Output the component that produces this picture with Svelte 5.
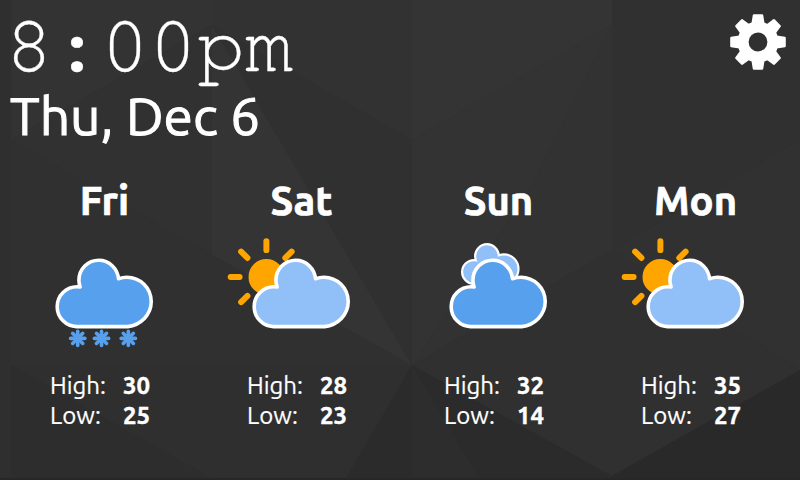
<script>
  const days = [
    { name: 'Fri', icon: 'snow', high: 30, low: 25 },
    { name: 'Sat', icon: 'sun', high: 28, low: 23 },
    { name: 'Sun', icon: 'cloud', high: 32, low: 14 },
    { name: 'Mon', icon: 'sun', high: 35, low: 27 }
  ];
  const cloud =
    'M47.7 35.4c0-4.6-3.7-8.2-8.2-8.2c-1 0-1.9.2-2.8.5c-.3-3.4-3.1-6.2-6.6-6.2c-3.7 0-6.7 3-6.7 6.7c0 .8.2 1.6.4 2.3c-.3-.1-.7-.1-1-.1c-3.7 0-6.7 3-6.7 6.7c0 3.6 2.9 6.6 6.5 6.7h17.2C44.2 43.3 47.7 39.8 47.7 35.4z';
  const turns = [0, 45, 90, 135, 180, 225, 270, 315];
</script>

<main class="screen">
  <svg class="backdrop" viewBox="0 0 800 480" aria-hidden="true">
    <rect width="800" height="480" fill="#303030" />
    <path d="M11 0H212V25L11 140z" fill="#333333" />
    <path d="M0 0H11V480H0z" fill="#2f2f2f" />
    <path d="M212 25L11 140L212 255z" fill="#313131" />
    <path d="M212 25V255L412 365z" fill="#343434" />
    <path d="M212 25L412 140V365z" fill="#303030" />
    <path d="M212 25V0H412V140z" fill="#323232" />
    <path d="M412 0H612V25L412 140z" fill="#343434" />
    <path d="M412 140L612 25L530 190L412 365z" fill="#333333" />
    <path d="M612 25V250L412 365L530 190z" fill="#323232" />
    <path d="M612 25L800 140L612 250z" fill="#303030" />
    <path d="M612 250L800 140V370z" fill="#313131" />
    <path d="M11 140L212 255L412 365H11z" fill="#303030" />
    <path d="M11 365L215 480H11z" fill="#2d2d2d" />
    <path d="M11 365H412L345 480H215z" fill="#2f2f2f" />
    <path d="M412 365L345 480H412z" fill="#2b2b2b" />
    <path d="M412 365V480H480z" fill="#2d2d2d" />
    <path d="M412 365L612 476V480H480z" fill="#2b2b2b" />
    <path d="M412 365L612 250L800 370L612 476z" fill="#303030" />
    <path d="M800 370L612 476V480H800z" fill="#292929" />
    <rect y="478" width="800" height="2" fill="#2a2528" />
  </svg>

  <header>
    <div>
      <div class="time">8:00pm</div>
      <div class="date">Thu, Dec 6</div>
    </div>
    <svg class="gear" viewBox="-28 -28 56 56" role="img" aria-label="Settings">
      <g fill="#fff">
        {#each turns as a}
          <path transform="rotate({a})" d="M-6.8-17L-5.2-27Q-5-27.8-4-27.8H4Q5-27.8 5.2-27L6.8-17z" />
        {/each}
      </g>
      <circle r="14.9" fill="none" stroke="#fff" stroke-width="11" />
    </svg>
  </header>

  <section class="forecast">
    {#each days as day}
      <article>
        <h2>{day.name}</h2>
        <svg class="weather" viewBox="0 10 64 42" aria-hidden="true">
          {#if day.icon === 'sun'}
            <g transform="translate(20.2 26.1)" stroke="#ffa500" stroke-width="2" stroke-linecap="round">
              {#each turns as a}
                <line y1="9" y2="12" transform="rotate({a})" />
              {/each}
              <circle r="5" fill="#ffa500" />
            </g>
          {/if}
          {#if day.icon === 'cloud'}
            <path d={cloud} transform="translate(10.1 2.2) scale(.6)" fill="#91c0f8" stroke="#fff" stroke-width="1.2" />
          {/if}
          <path
            d={cloud}
            transform="translate(0 -1)"
            fill={day.icon === 'sun' ? '#91c0f8' : '#57a0ee'}
            stroke="#fff"
            stroke-width="1.2"
            stroke-linejoin="round"
          />
          {#if day.icon === 'snow'}
            {#each [23, 31, 40] as x}
              <g transform="translate({x} 46.75)" stroke="#57a0ee" stroke-width="1.2" stroke-linecap="round">
                {#each turns.slice(0, 4) as a}
                  <line y1="-2.4" y2="2.4" transform="rotate({a})" />
                {/each}
              </g>
            {/each}
          {/if}
        </svg>
        <dl>
          <dt>High:</dt><dd>{day.high}</dd>
          <dt>Low:</dt><dd>{day.low}</dd>
        </dl>
      </article>
    {/each}
  </section>
</main>

<style>
  :global(body) { margin: 0; background: #303030; }
  .screen {
    position: relative;
    width: 800px;
    height: 480px;
    overflow: hidden;
    color: #fff;
    font-family: Ubuntu, "Noto Sans", sans-serif;
  }
  .backdrop { position: absolute; inset: 0; width: 800px; height: 480px; }
  header, .forecast { position: relative; }
  header {
    display: flex;
    justify-content: space-between;
    align-items: flex-start;
    height: 179px;
    padding: 0 14px 0 5px;
    box-sizing: border-box;
  }
  .time {
    height: 90px;
    line-height: 94px;
    font-size: 80px;
    white-space: nowrap;
    font-family: "Nimbus Mono PS", "Nimbus Mono L", "Courier 10 Pitch", FreeMono, "TeX Gyre Cursor", "Courier Prime", Courier, monospace;
    -webkit-text-stroke: .3px #fff;
  }
  .date { padding-left: 5px; font-size: 53.33px; line-height: 50px; white-space: nowrap; -webkit-text-stroke: 1px #fff; }
  .gear { width: 56px; height: 56px; margin-top: 14px; }
  .forecast { display: flex; padding: 0 6px; }
  article { width: 197px; display: flex; flex-direction: column; align-items: center; }
  h2 { margin: 0; height: 50px; font-size: 40px; line-height: 43px; font-weight: 700; -webkit-text-stroke: .7px #fff; }
  .weather { width: 191px; height: 125px; flex: none; }
  dl {
    align-self: stretch;
    display: grid;
    grid-template-columns: 73px auto;
    grid-auto-rows: 30px;
    line-height: 30px;
    margin: 17px 0 0;
    padding-left: 44px;
    font-size: 24px;
  }
  dt { -webkit-text-stroke: .2px #fff; }
  dd { margin: 0; font-weight: 700; -webkit-text-stroke: .4px #fff; }
</style>
